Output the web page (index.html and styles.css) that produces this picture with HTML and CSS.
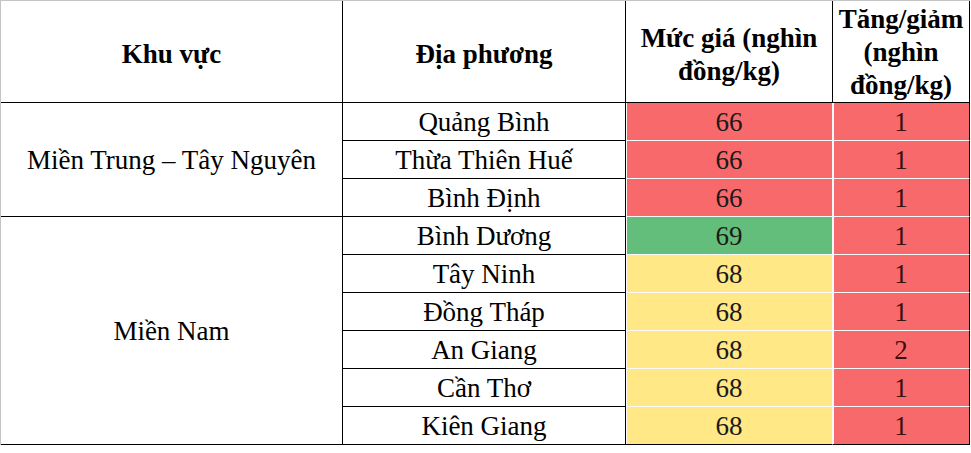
FILE: index.html
```html
<!DOCTYPE html>
<html lang="vi">
<head>
<meta charset="utf-8">
<title>Giá</title>
<link rel="stylesheet" href="styles.css">
</head>
<body>
<table class="price-table">
  <colgroup>
    <col class="c1">
    <col class="c2">
    <col class="c3">
    <col class="c4">
  </colgroup>
  <thead>
    <tr class="head-row">
      <th>Khu vực</th>
      <th>Địa phương</th>
      <th class="h-price">Mức giá (nghìn<br>đồng/kg)</th>
      <th class="h-change">Tăng/giảm<br>(nghìn<br>đồng/kg)</th>
    </tr>
  </thead>
  <tbody>
    <tr>
      <td class="region" rowspan="3">Miền Trung – Tây Nguyên</td>
      <td>Quảng Bình</td>
      <td class="val price red">66</td>
      <td class="val change red">1</td>
    </tr>
    <tr>
      <td>Thừa Thiên Huế</td>
      <td class="val price red">66</td>
      <td class="val change red">1</td>
    </tr>
    <tr>
      <td>Bình Định</td>
      <td class="val price red">66</td>
      <td class="val change red">1</td>
    </tr>
    <tr>
      <td class="region" rowspan="6">Miền Nam</td>
      <td>Bình Dương</td>
      <td class="val price green">69</td>
      <td class="val change red">1</td>
    </tr>
    <tr>
      <td>Tây Ninh</td>
      <td class="val price yellow">68</td>
      <td class="val change red">1</td>
    </tr>
    <tr>
      <td>Đồng Tháp</td>
      <td class="val price yellow">68</td>
      <td class="val change red">1</td>
    </tr>
    <tr>
      <td>An Giang</td>
      <td class="val price yellow">68</td>
      <td class="val change red">2</td>
    </tr>
    <tr>
      <td>Cần Thơ</td>
      <td class="val price yellow">68</td>
      <td class="val change red">1</td>
    </tr>
    <tr class="last">
      <td>Kiên Giang</td>
      <td class="val price yellow">68</td>
      <td class="val change red">1</td>
    </tr>
  </tbody>
</table>
</body>
</html>
```

FILE: styles.css
```css
html, body {
  margin: 0;
  padding: 0;
  background: #ffffff;
}

.price-table {
  border-collapse: separate;
  border-spacing: 0;
  table-layout: fixed;
  width: 970px;
  border-top: 1px solid #c4c4c4;
  border-left: 1px solid #c4c4c4;
  font-family: "Liberation Serif", "Times New Roman", serif;
  color: #000;
}

.c1 { width: 342px; }
.c2 { width: 283px; }
.c3 { width: 207px; }
.c4 { width: 137px; }

.price-table th,
.price-table td {
  box-sizing: border-box;
  padding: 0;
  border-right: 1px solid #000;
  border-bottom: 1px solid #000;
  text-align: center;
  vertical-align: middle;
}

.price-table th {
  height: 102px;
  padding-top: 6px;
  font-size: 27px;
  font-weight: bold;
  line-height: 33px;
}

.price-table th.h-change {
  padding-top: 1px;
}

.price-table td {
  height: 38px;
  font-size: 27px;
  font-weight: normal;
  line-height: 30px;
}

.price-table td.val {
  border-bottom-color: #fafafa;
  box-shadow: inset 1px 0 0 #fafafa;
}

.price-table td.price {
  border-right-color: #fafafa;
  color: #1a1a1a;
}

.price-table td.change {
  color: #3a1010;
}

.price-table tr.last td.val {
  border-bottom-color: #000;
}

.red { background: #f8696b; }
.green { background: #63be7b; }
.yellow { background: #ffe885; }
```
